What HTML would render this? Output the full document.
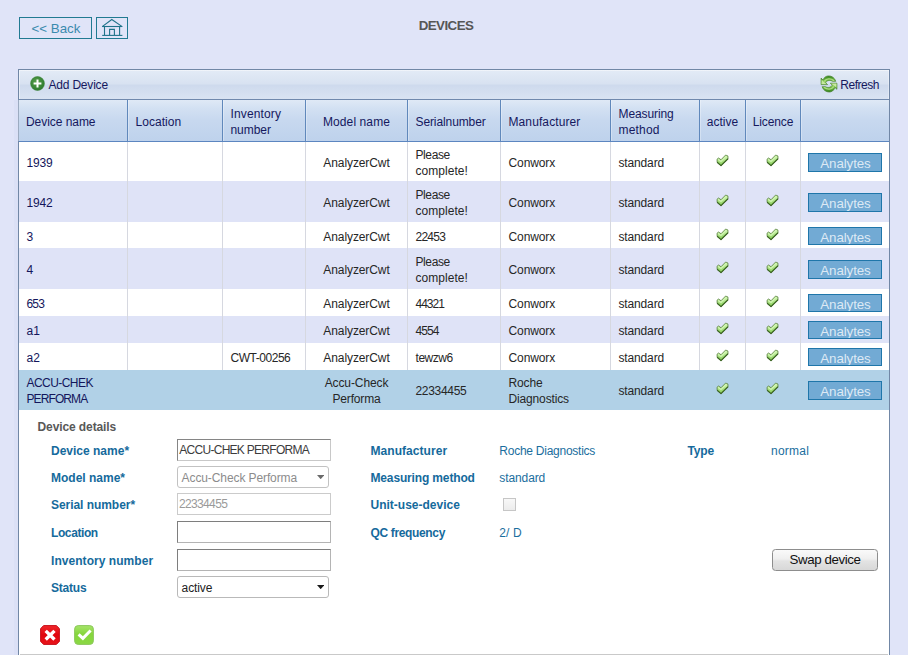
<!DOCTYPE html><html><head><meta charset="utf-8"><title>Devices</title><style>
html,body{margin:0;padding:0}
body{width:908px;height:655px;overflow:hidden;background:#e0e4f8;font-family:"Liberation Sans",sans-serif;font-size:12px;position:relative;color:#222}
.abs{position:absolute}
.btn0{position:absolute;top:17px;height:20px;border:1px solid #217a92;background:#e0e4f8;color:#3a8aae;font-size:13.33px;line-height:21px;text-align:center;box-sizing:content-box}
#title{position:absolute;left:346px;width:200px;top:17.6px;text-align:center;font-weight:bold;font-size:13.33px;color:#565656;letter-spacing:-0.55px;line-height:16px}
#panel{position:absolute;left:18px;top:69px;width:870px;height:600px;border:1px solid #7187a6;background:#fff}
#tb{position:absolute;left:19px;top:70px;width:870px;height:29px;box-shadow:inset 1px 1px 0 rgba(255,255,255,0.45),inset -1px 0 0 rgba(255,255,255,0.3);background:linear-gradient(#e3ebf6 0%,#d8e2f1 47%,#cedaed 53%,#d9e3f2 100%)}
#tb span{position:absolute;top:8px;line-height:14px;color:#15185e;font-size:12px;letter-spacing:-0.2px}
#hd{position:absolute;left:19px;top:99px;width:870px;height:41px;border-top:1px solid #7089ad;border-bottom:1px solid #5c86c0;box-sizing:content-box;background:linear-gradient(#dfe9f6 0%,#d2e0f2 22%,#c7d8ef 50%,#bed2ec 100%)}
.hc{position:absolute;top:0;height:41px;border-left:1px solid #6088bb;box-shadow:inset 1px 0 0 rgba(255,255,255,0.3);color:#15185e;display:flex;align-items:center;line-height:16px;letter-spacing:0;box-sizing:border-box;padding-left:7.5px;padding-top:2px}
.row{position:absolute;left:19px;width:870px}
.row.alt{background:#dfe3f7}
.row.sel{background:#b1d1e7}
.c{position:absolute;top:0;height:100%;border-left:1px solid #d6d8e0;display:flex;align-items:center;line-height:16px;box-sizing:border-box;padding-left:7.5px;padding-top:3px;letter-spacing:0;color:#262626}
.row.sel .c{border-left-color:transparent}
.c.first{border-left:none;color:#13165c}
.c.ctr{justify-content:center;text-align:center;padding-left:0}
.an{position:absolute;left:788.5px;height:16.5px;border:1px solid #1f76aa;background:#72aad4;color:#dde9f4;padding-left:2px;width:70px;font-size:13.33px;text-align:center;line-height:20px;overflow:hidden;letter-spacing:-0.1px}
.ck{position:absolute}
.lbl{position:absolute;font-weight:bold;color:#156a9c;letter-spacing:-0.15px;line-height:14px}
.val{position:absolute;color:#1a6e9e;letter-spacing:-0.25px;line-height:14px}
.inp{position:absolute;left:177px;width:152px;box-sizing:content-box;background:#fff;line-height:14px;white-space:nowrap;overflow:hidden}
</style></head><body>
<div class="btn0" style="left:19px;width:71px;text-indent:1px">&lt;&lt; Back</div>
<div class="btn0" style="left:96px;width:30px"><svg width="30" height="20" viewBox="0 0 30 20" style="position:absolute;left:0;top:0"><g fill="none" stroke="#1f738a" stroke-width="1.1"><path d="M5.2,8.6 L14.8,1.5 L25.2,8.6"/><path d="M5.2,8.5 H25.3"/><path d="M7.5,8.5 V17 M22.6,8.5 V17"/><path d="M12.6,17 V11.4 H17.4 V17"/><path d="M5.2,17.4 H25.4"/></g></svg></div>
<div id="title">DEVICES</div>
<svg width="0" height="0" style="position:absolute"><defs><linearGradient id="gck" x1="0" y1="0" x2="0" y2="1"><stop offset="0.2" stop-color="#c9f2a6"/><stop offset="0.8" stop-color="#93d566"/></linearGradient><linearGradient id="gra" x1="0" y1="0" x2="0" y2="1"><stop offset="0" stop-color="#2f7f1a"/><stop offset="0.45" stop-color="#6db840"/><stop offset="1" stop-color="#b9e584"/></linearGradient><linearGradient id="grb" x1="0" y1="0" x2="0" y2="1"><stop offset="0" stop-color="#c4ea8c"/><stop offset="0.55" stop-color="#6db840"/><stop offset="1" stop-color="#2f7f1a"/></linearGradient></defs></svg>
<div class="abs" style="left:14px;top:100px;width:4px;height:555px;background:#dbe0f6"></div>
<div id="panel"></div>
<div id="tb">
<svg class="abs" style="left:10.5px;top:6.2px" width="15" height="15" viewBox="0 0 15 15"><defs><radialGradient id="g1" cx="0.42" cy="0.38" r="0.65"><stop offset="0" stop-color="#58a04c"/><stop offset="1" stop-color="#2b7a2c"/></radialGradient></defs><circle cx="7.5" cy="7.5" r="6.9" fill="url(#g1)" stroke="#3a8238" stroke-width="0.6"/><path d="M7.5,3.6 V11.4 M3.6,7.5 H11.4" stroke="#fff" stroke-width="2"/></svg>
<span style="left:29.5px">Add Device</span>
<svg class="abs" style="left:797px;top:2px" width="26" height="24" viewBox="0 0 26 24"><g stroke="#47822e" stroke-width="0.7" stroke-linejoin="round"><path d="M5.1,6.1 L5.1,12.6 L11.6,12.6 L9.7,10.7 C10.6,8.6 13.8,7.6 16.4,9.3 L19.8,9.3 C18.6,5.6 15.6,3.9 12.7,3.9 C10.3,3.9 8.2,5 7.0,8.0 Z" fill="url(#gra)"/><path d="M20.9,17.3 L20.9,11.2 L14.3,11.2 L16.2,13.1 C15.3,15.3 12.1,16.3 9.5,14.7 L6.1,14.7 C7.3,18.3 10.3,20 13.2,20 C15.6,20 17.7,18.9 18.9,15.4 Z" fill="url(#grb)"/></g><g fill="none" stroke-linecap="round"><path d="M8.6,9.0 C10.2,6.6 14.6,5.9 17.6,8.4" stroke="#b9e290" stroke-width="1.3" opacity="0.85"/><path d="M17.4,15.0 C15.8,17.4 11.4,18.1 8.4,15.6" stroke="#b9e290" stroke-width="1.3" opacity="0.85"/></g><path d="M5.7,7.8 L5.7,12.0 L9.9,12.0 Z" fill="#c6e9a0"/><path d="M20.3,15.6 L20.3,11.8 L16.1,11.8 Z" fill="#c6e9a0"/></svg>
<span style="left:821.3px;letter-spacing:-0.5px">Refresh</span>
</div>
<div id="hd">
<div class="hc" style="left:-1px;width:109px;border-left:none;padding-left:8px;"><div><span style="letter-spacing:-0.05px">Device name</span></div></div>
<div class="hc" style="left:108px;width:95px;"><div><span style="letter-spacing:0.05px">Location</span></div></div>
<div class="hc" style="left:203px;width:83px;"><div><span style="letter-spacing:0.13px">Inventory</span><br><span style="letter-spacing:-0.05px">number</span></div></div>
<div class="hc" style="left:286px;width:102px;justify-content:center;padding-left:0;"><div><span style="letter-spacing:0.1px">Model name</span></div></div>
<div class="hc" style="left:388px;width:93px;"><div><span style="letter-spacing:-0.1px">Serialnumber</span></div></div>
<div class="hc" style="left:481px;width:110px;"><div><span style="letter-spacing:0.1px">Manufacturer</span></div></div>
<div class="hc" style="left:591px;width:89px;"><div><span style="letter-spacing:-0.1px">Measuring</span><br><span style="letter-spacing:0.2px">method</span></div></div>
<div class="hc" style="left:680px;width:46px;justify-content:center;padding-left:0;"><div><span style="letter-spacing:0.0px">active</span></div></div>
<div class="hc" style="left:726px;width:55px;justify-content:center;padding-left:0;"><div><span style="letter-spacing:-0.1px">Licence</span></div></div>
<div class="hc" style="left:781px;width:89px;"><div></div></div>
</div>
<div class="row" style="top:142px;height:39px">
<div class="c first" style="left:0;width:110px;padding-left:7.5px;"><div><span style="letter-spacing:-0.15px">1939</span></div></div>
<div class="c" style="left:108px;width:95px;"><div></div></div>
<div class="c" style="left:203px;width:83px;"><div></div></div>
<div class="c ctr" style="left:286px;width:102px;"><div><span style="letter-spacing:-0.1px">AnalyzerCwt</span></div></div>
<div class="c" style="left:388px;width:93px;"><div><span style="letter-spacing:-0.4px">Please</span><br><span style="letter-spacing:0.05px">complete!</span></div></div>
<div class="c" style="left:481px;width:110px;"><div><span style="letter-spacing:-0.1px">Conworx</span></div></div>
<div class="c" style="left:591px;width:89px;"><div><span style="letter-spacing:-0.15px">standard</span></div></div>
<div class="c" style="left:680px;width:46px"></div>
<div class="c" style="left:726px;width:55px"></div>
<div class="c" style="left:781px;width:89px"></div>
<svg class="ck" style="left:693.0px;top:8.25px" width="22" height="20" viewBox="0 0 22 20"><path d="M5.05,9.2 L6.6,8.0 L9.0,9.75 L13.6,5.05 L15.9,5.95 L16.05,8.9 L9.0,15.75 L5.15,12.4 Z" fill="url(#gck)" stroke="#557c3c" stroke-width="0.8" stroke-linejoin="round"/><path d="M5.2,12.3 L9.0,15.6 L16.0,8.8" fill="none" stroke="#3c6424" stroke-width="1.2" stroke-linejoin="round"/><path d="M6.4,9.6 L9.0,11.5 L14.2,6.4" fill="none" stroke="#d2f5b4" stroke-width="1.1" stroke-linecap="round"/></svg>
<svg class="ck" style="left:743.1px;top:8.25px" width="22" height="20" viewBox="0 0 22 20"><path d="M5.05,9.2 L6.6,8.0 L9.0,9.75 L13.6,5.05 L15.9,5.95 L16.05,8.9 L9.0,15.75 L5.15,12.4 Z" fill="url(#gck)" stroke="#557c3c" stroke-width="0.8" stroke-linejoin="round"/><path d="M5.2,12.3 L9.0,15.6 L16.0,8.8" fill="none" stroke="#3c6424" stroke-width="1.2" stroke-linejoin="round"/><path d="M6.4,9.6 L9.0,11.5 L14.2,6.4" fill="none" stroke="#d2f5b4" stroke-width="1.1" stroke-linecap="round"/></svg>
<div class="an" style="top:11.25px">Analytes</div>
</div>
<div class="row alt" style="top:181px;height:40.5px">
<div class="c first" style="left:0;width:110px;padding-left:7.5px;"><div><span style="letter-spacing:-0.15px">1942</span></div></div>
<div class="c" style="left:108px;width:95px;"><div></div></div>
<div class="c" style="left:203px;width:83px;"><div></div></div>
<div class="c ctr" style="left:286px;width:102px;"><div><span style="letter-spacing:-0.1px">AnalyzerCwt</span></div></div>
<div class="c" style="left:388px;width:93px;"><div><span style="letter-spacing:-0.4px">Please</span><br><span style="letter-spacing:0.05px">complete!</span></div></div>
<div class="c" style="left:481px;width:110px;"><div><span style="letter-spacing:-0.1px">Conworx</span></div></div>
<div class="c" style="left:591px;width:89px;"><div><span style="letter-spacing:-0.15px">standard</span></div></div>
<div class="c" style="left:680px;width:46px"></div>
<div class="c" style="left:726px;width:55px"></div>
<div class="c" style="left:781px;width:89px"></div>
<svg class="ck" style="left:693.0px;top:9.00px" width="22" height="20" viewBox="0 0 22 20"><path d="M5.05,9.2 L6.6,8.0 L9.0,9.75 L13.6,5.05 L15.9,5.95 L16.05,8.9 L9.0,15.75 L5.15,12.4 Z" fill="url(#gck)" stroke="#557c3c" stroke-width="0.8" stroke-linejoin="round"/><path d="M5.2,12.3 L9.0,15.6 L16.0,8.8" fill="none" stroke="#3c6424" stroke-width="1.2" stroke-linejoin="round"/><path d="M6.4,9.6 L9.0,11.5 L14.2,6.4" fill="none" stroke="#d2f5b4" stroke-width="1.1" stroke-linecap="round"/></svg>
<svg class="ck" style="left:743.1px;top:9.00px" width="22" height="20" viewBox="0 0 22 20"><path d="M5.05,9.2 L6.6,8.0 L9.0,9.75 L13.6,5.05 L15.9,5.95 L16.05,8.9 L9.0,15.75 L5.15,12.4 Z" fill="url(#gck)" stroke="#557c3c" stroke-width="0.8" stroke-linejoin="round"/><path d="M5.2,12.3 L9.0,15.6 L16.0,8.8" fill="none" stroke="#3c6424" stroke-width="1.2" stroke-linejoin="round"/><path d="M6.4,9.6 L9.0,11.5 L14.2,6.4" fill="none" stroke="#d2f5b4" stroke-width="1.1" stroke-linecap="round"/></svg>
<div class="an" style="top:12.00px">Analytes</div>
</div>
<div class="row" style="top:221.5px;height:26.5px">
<div class="c first" style="left:0;width:110px;padding-left:7.5px;padding-top:4.5px;"><div>3</div></div>
<div class="c" style="left:108px;width:95px;padding-top:4.5px;"><div></div></div>
<div class="c" style="left:203px;width:83px;padding-top:4.5px;"><div></div></div>
<div class="c ctr" style="left:286px;width:102px;padding-top:4.5px;"><div><span style="letter-spacing:-0.1px">AnalyzerCwt</span></div></div>
<div class="c" style="left:388px;width:93px;padding-top:4.5px;"><div><span style="letter-spacing:-0.75px">22453</span></div></div>
<div class="c" style="left:481px;width:110px;padding-top:4.5px;"><div><span style="letter-spacing:-0.1px">Conworx</span></div></div>
<div class="c" style="left:591px;width:89px;padding-top:4.5px;"><div><span style="letter-spacing:-0.15px">standard</span></div></div>
<div class="c" style="left:680px;width:46px"></div>
<div class="c" style="left:726px;width:55px"></div>
<div class="c" style="left:781px;width:89px"></div>
<svg class="ck" style="left:693.0px;top:2.00px" width="22" height="20" viewBox="0 0 22 20"><path d="M5.05,9.2 L6.6,8.0 L9.0,9.75 L13.6,5.05 L15.9,5.95 L16.05,8.9 L9.0,15.75 L5.15,12.4 Z" fill="url(#gck)" stroke="#557c3c" stroke-width="0.8" stroke-linejoin="round"/><path d="M5.2,12.3 L9.0,15.6 L16.0,8.8" fill="none" stroke="#3c6424" stroke-width="1.2" stroke-linejoin="round"/><path d="M6.4,9.6 L9.0,11.5 L14.2,6.4" fill="none" stroke="#d2f5b4" stroke-width="1.1" stroke-linecap="round"/></svg>
<svg class="ck" style="left:743.1px;top:2.00px" width="22" height="20" viewBox="0 0 22 20"><path d="M5.05,9.2 L6.6,8.0 L9.0,9.75 L13.6,5.05 L15.9,5.95 L16.05,8.9 L9.0,15.75 L5.15,12.4 Z" fill="url(#gck)" stroke="#557c3c" stroke-width="0.8" stroke-linejoin="round"/><path d="M5.2,12.3 L9.0,15.6 L16.0,8.8" fill="none" stroke="#3c6424" stroke-width="1.2" stroke-linejoin="round"/><path d="M6.4,9.6 L9.0,11.5 L14.2,6.4" fill="none" stroke="#d2f5b4" stroke-width="1.1" stroke-linecap="round"/></svg>
<div class="an" style="top:5.00px">Analytes</div>
</div>
<div class="row alt" style="top:248px;height:40.5px">
<div class="c first" style="left:0;width:110px;padding-left:7.5px;"><div>4</div></div>
<div class="c" style="left:108px;width:95px;"><div></div></div>
<div class="c" style="left:203px;width:83px;"><div></div></div>
<div class="c ctr" style="left:286px;width:102px;"><div><span style="letter-spacing:-0.1px">AnalyzerCwt</span></div></div>
<div class="c" style="left:388px;width:93px;"><div><span style="letter-spacing:-0.4px">Please</span><br><span style="letter-spacing:0.05px">complete!</span></div></div>
<div class="c" style="left:481px;width:110px;"><div><span style="letter-spacing:-0.1px">Conworx</span></div></div>
<div class="c" style="left:591px;width:89px;"><div><span style="letter-spacing:-0.15px">standard</span></div></div>
<div class="c" style="left:680px;width:46px"></div>
<div class="c" style="left:726px;width:55px"></div>
<div class="c" style="left:781px;width:89px"></div>
<svg class="ck" style="left:693.0px;top:9.00px" width="22" height="20" viewBox="0 0 22 20"><path d="M5.05,9.2 L6.6,8.0 L9.0,9.75 L13.6,5.05 L15.9,5.95 L16.05,8.9 L9.0,15.75 L5.15,12.4 Z" fill="url(#gck)" stroke="#557c3c" stroke-width="0.8" stroke-linejoin="round"/><path d="M5.2,12.3 L9.0,15.6 L16.0,8.8" fill="none" stroke="#3c6424" stroke-width="1.2" stroke-linejoin="round"/><path d="M6.4,9.6 L9.0,11.5 L14.2,6.4" fill="none" stroke="#d2f5b4" stroke-width="1.1" stroke-linecap="round"/></svg>
<svg class="ck" style="left:743.1px;top:9.00px" width="22" height="20" viewBox="0 0 22 20"><path d="M5.05,9.2 L6.6,8.0 L9.0,9.75 L13.6,5.05 L15.9,5.95 L16.05,8.9 L9.0,15.75 L5.15,12.4 Z" fill="url(#gck)" stroke="#557c3c" stroke-width="0.8" stroke-linejoin="round"/><path d="M5.2,12.3 L9.0,15.6 L16.0,8.8" fill="none" stroke="#3c6424" stroke-width="1.2" stroke-linejoin="round"/><path d="M6.4,9.6 L9.0,11.5 L14.2,6.4" fill="none" stroke="#d2f5b4" stroke-width="1.1" stroke-linecap="round"/></svg>
<div class="an" style="top:12.00px">Analytes</div>
</div>
<div class="row" style="top:288.5px;height:27.0px">
<div class="c first" style="left:0;width:110px;padding-left:7.5px;padding-top:4.5px;"><div><span style="letter-spacing:-0.8px">653</span></div></div>
<div class="c" style="left:108px;width:95px;padding-top:4.5px;"><div></div></div>
<div class="c" style="left:203px;width:83px;padding-top:4.5px;"><div></div></div>
<div class="c ctr" style="left:286px;width:102px;padding-top:4.5px;"><div><span style="letter-spacing:-0.1px">AnalyzerCwt</span></div></div>
<div class="c" style="left:388px;width:93px;padding-top:4.5px;"><div><span style="letter-spacing:-1.0px">44321</span></div></div>
<div class="c" style="left:481px;width:110px;padding-top:4.5px;"><div><span style="letter-spacing:-0.1px">Conworx</span></div></div>
<div class="c" style="left:591px;width:89px;padding-top:4.5px;"><div><span style="letter-spacing:-0.15px">standard</span></div></div>
<div class="c" style="left:680px;width:46px"></div>
<div class="c" style="left:726px;width:55px"></div>
<div class="c" style="left:781px;width:89px"></div>
<svg class="ck" style="left:693.0px;top:2.25px" width="22" height="20" viewBox="0 0 22 20"><path d="M5.05,9.2 L6.6,8.0 L9.0,9.75 L13.6,5.05 L15.9,5.95 L16.05,8.9 L9.0,15.75 L5.15,12.4 Z" fill="url(#gck)" stroke="#557c3c" stroke-width="0.8" stroke-linejoin="round"/><path d="M5.2,12.3 L9.0,15.6 L16.0,8.8" fill="none" stroke="#3c6424" stroke-width="1.2" stroke-linejoin="round"/><path d="M6.4,9.6 L9.0,11.5 L14.2,6.4" fill="none" stroke="#d2f5b4" stroke-width="1.1" stroke-linecap="round"/></svg>
<svg class="ck" style="left:743.1px;top:2.25px" width="22" height="20" viewBox="0 0 22 20"><path d="M5.05,9.2 L6.6,8.0 L9.0,9.75 L13.6,5.05 L15.9,5.95 L16.05,8.9 L9.0,15.75 L5.15,12.4 Z" fill="url(#gck)" stroke="#557c3c" stroke-width="0.8" stroke-linejoin="round"/><path d="M5.2,12.3 L9.0,15.6 L16.0,8.8" fill="none" stroke="#3c6424" stroke-width="1.2" stroke-linejoin="round"/><path d="M6.4,9.6 L9.0,11.5 L14.2,6.4" fill="none" stroke="#d2f5b4" stroke-width="1.1" stroke-linecap="round"/></svg>
<div class="an" style="top:5.25px">Analytes</div>
</div>
<div class="row alt" style="top:315.5px;height:27.0px">
<div class="c first" style="left:0;width:110px;padding-left:7.5px;padding-top:4.5px;"><div>a1</div></div>
<div class="c" style="left:108px;width:95px;padding-top:4.5px;"><div></div></div>
<div class="c" style="left:203px;width:83px;padding-top:4.5px;"><div></div></div>
<div class="c ctr" style="left:286px;width:102px;padding-top:4.5px;"><div><span style="letter-spacing:-0.1px">AnalyzerCwt</span></div></div>
<div class="c" style="left:388px;width:93px;padding-top:4.5px;"><div><span style="letter-spacing:-0.95px">4554</span></div></div>
<div class="c" style="left:481px;width:110px;padding-top:4.5px;"><div><span style="letter-spacing:-0.1px">Conworx</span></div></div>
<div class="c" style="left:591px;width:89px;padding-top:4.5px;"><div><span style="letter-spacing:-0.15px">standard</span></div></div>
<div class="c" style="left:680px;width:46px"></div>
<div class="c" style="left:726px;width:55px"></div>
<div class="c" style="left:781px;width:89px"></div>
<svg class="ck" style="left:693.0px;top:2.25px" width="22" height="20" viewBox="0 0 22 20"><path d="M5.05,9.2 L6.6,8.0 L9.0,9.75 L13.6,5.05 L15.9,5.95 L16.05,8.9 L9.0,15.75 L5.15,12.4 Z" fill="url(#gck)" stroke="#557c3c" stroke-width="0.8" stroke-linejoin="round"/><path d="M5.2,12.3 L9.0,15.6 L16.0,8.8" fill="none" stroke="#3c6424" stroke-width="1.2" stroke-linejoin="round"/><path d="M6.4,9.6 L9.0,11.5 L14.2,6.4" fill="none" stroke="#d2f5b4" stroke-width="1.1" stroke-linecap="round"/></svg>
<svg class="ck" style="left:743.1px;top:2.25px" width="22" height="20" viewBox="0 0 22 20"><path d="M5.05,9.2 L6.6,8.0 L9.0,9.75 L13.6,5.05 L15.9,5.95 L16.05,8.9 L9.0,15.75 L5.15,12.4 Z" fill="url(#gck)" stroke="#557c3c" stroke-width="0.8" stroke-linejoin="round"/><path d="M5.2,12.3 L9.0,15.6 L16.0,8.8" fill="none" stroke="#3c6424" stroke-width="1.2" stroke-linejoin="round"/><path d="M6.4,9.6 L9.0,11.5 L14.2,6.4" fill="none" stroke="#d2f5b4" stroke-width="1.1" stroke-linecap="round"/></svg>
<div class="an" style="top:5.25px">Analytes</div>
</div>
<div class="row" style="top:342.5px;height:27.0px">
<div class="c first" style="left:0;width:110px;padding-left:7.5px;padding-top:4.5px;"><div>a2</div></div>
<div class="c" style="left:108px;width:95px;padding-top:4.5px;"><div></div></div>
<div class="c" style="left:203px;width:83px;padding-top:4.5px;"><div><span style="letter-spacing:-0.47px">CWT-00256</span></div></div>
<div class="c ctr" style="left:286px;width:102px;padding-top:4.5px;"><div><span style="letter-spacing:-0.1px">AnalyzerCwt</span></div></div>
<div class="c" style="left:388px;width:93px;padding-top:4.5px;"><div><span style="letter-spacing:-0.45px">tewzw6</span></div></div>
<div class="c" style="left:481px;width:110px;padding-top:4.5px;"><div><span style="letter-spacing:-0.1px">Conworx</span></div></div>
<div class="c" style="left:591px;width:89px;padding-top:4.5px;"><div><span style="letter-spacing:-0.15px">standard</span></div></div>
<div class="c" style="left:680px;width:46px"></div>
<div class="c" style="left:726px;width:55px"></div>
<div class="c" style="left:781px;width:89px"></div>
<svg class="ck" style="left:693.0px;top:2.25px" width="22" height="20" viewBox="0 0 22 20"><path d="M5.05,9.2 L6.6,8.0 L9.0,9.75 L13.6,5.05 L15.9,5.95 L16.05,8.9 L9.0,15.75 L5.15,12.4 Z" fill="url(#gck)" stroke="#557c3c" stroke-width="0.8" stroke-linejoin="round"/><path d="M5.2,12.3 L9.0,15.6 L16.0,8.8" fill="none" stroke="#3c6424" stroke-width="1.2" stroke-linejoin="round"/><path d="M6.4,9.6 L9.0,11.5 L14.2,6.4" fill="none" stroke="#d2f5b4" stroke-width="1.1" stroke-linecap="round"/></svg>
<svg class="ck" style="left:743.1px;top:2.25px" width="22" height="20" viewBox="0 0 22 20"><path d="M5.05,9.2 L6.6,8.0 L9.0,9.75 L13.6,5.05 L15.9,5.95 L16.05,8.9 L9.0,15.75 L5.15,12.4 Z" fill="url(#gck)" stroke="#557c3c" stroke-width="0.8" stroke-linejoin="round"/><path d="M5.2,12.3 L9.0,15.6 L16.0,8.8" fill="none" stroke="#3c6424" stroke-width="1.2" stroke-linejoin="round"/><path d="M6.4,9.6 L9.0,11.5 L14.2,6.4" fill="none" stroke="#d2f5b4" stroke-width="1.1" stroke-linecap="round"/></svg>
<div class="an" style="top:5.25px">Analytes</div>
</div>
<div class="row sel" style="top:369.5px;height:40.0px">
<div class="c first" style="left:0;width:110px;padding-left:7.5px;"><div><span style="letter-spacing:-0.55px">ACCU-CHEK</span><br><span style="letter-spacing:-0.9px">PERFORMA</span></div></div>
<div class="c" style="left:108px;width:95px;"><div></div></div>
<div class="c" style="left:203px;width:83px;"><div></div></div>
<div class="c ctr" style="left:286px;width:102px;"><div><span style="letter-spacing:-0.1px">Accu-Check</span><br><span style="letter-spacing:-0.15px">Performa</span></div></div>
<div class="c" style="left:388px;width:93px;"><div><span style="letter-spacing:-0.3px">22334455</span></div></div>
<div class="c" style="left:481px;width:110px;"><div><span style="letter-spacing:-0.15px">Roche</span><br><span style="letter-spacing:-0.15px">Diagnostics</span></div></div>
<div class="c" style="left:591px;width:89px;"><div><span style="letter-spacing:-0.15px">standard</span></div></div>
<div class="c" style="left:680px;width:46px"></div>
<div class="c" style="left:726px;width:55px"></div>
<div class="c" style="left:781px;width:89px"></div>
<svg class="ck" style="left:693.0px;top:8.75px" width="22" height="20" viewBox="0 0 22 20"><path d="M5.05,9.2 L6.6,8.0 L9.0,9.75 L13.6,5.05 L15.9,5.95 L16.05,8.9 L9.0,15.75 L5.15,12.4 Z" fill="url(#gck)" stroke="#557c3c" stroke-width="0.8" stroke-linejoin="round"/><path d="M5.2,12.3 L9.0,15.6 L16.0,8.8" fill="none" stroke="#3c6424" stroke-width="1.2" stroke-linejoin="round"/><path d="M6.4,9.6 L9.0,11.5 L14.2,6.4" fill="none" stroke="#d2f5b4" stroke-width="1.1" stroke-linecap="round"/></svg>
<svg class="ck" style="left:743.1px;top:8.75px" width="22" height="20" viewBox="0 0 22 20"><path d="M5.05,9.2 L6.6,8.0 L9.0,9.75 L13.6,5.05 L15.9,5.95 L16.05,8.9 L9.0,15.75 L5.15,12.4 Z" fill="url(#gck)" stroke="#557c3c" stroke-width="0.8" stroke-linejoin="round"/><path d="M5.2,12.3 L9.0,15.6 L16.0,8.8" fill="none" stroke="#3c6424" stroke-width="1.2" stroke-linejoin="round"/><path d="M6.4,9.6 L9.0,11.5 L14.2,6.4" fill="none" stroke="#d2f5b4" stroke-width="1.1" stroke-linecap="round"/></svg>
<div class="an" style="top:11.75px">Analytes</div>
</div>
<div class="abs" style="left:37.5px;top:420px;font-weight:bold;color:#585858;line-height:14px;letter-spacing:-0.1px">Device details</div>
<div class="lbl" style="left:51px;top:443.5px;letter-spacing:0.0px">Device name*</div>
<div class="lbl" style="left:51px;top:470.5px;letter-spacing:0.0px">Model name*</div>
<div class="lbl" style="left:51px;top:497.5px;letter-spacing:-0.05px">Serial number*</div>
<div class="lbl" style="left:51px;top:525.5px;letter-spacing:-0.4px">Location</div>
<div class="lbl" style="left:51px;top:554.1px;letter-spacing:0.05px">Inventory number</div>
<div class="lbl" style="left:51px;top:580.5px;letter-spacing:-0.2px">Status</div>
<div class="lbl" style="left:370.5px;top:444.0px;letter-spacing:0.05px">Manufacturer</div>
<div class="val" style="left:499.3px;top:444.0px;letter-spacing:-0.25px">Roche Diagnostics</div>
<div class="lbl" style="left:370.5px;top:471.2px;letter-spacing:-0.15px">Measuring method</div>
<div class="val" style="left:499.3px;top:471.2px;letter-spacing:-0.1px">standard</div>
<div class="lbl" style="left:370.5px;top:497.7px;letter-spacing:0.0px">Unit-use-device</div>
<div class="lbl" style="left:370.5px;top:526.2px;letter-spacing:-0.35px">QC frequency</div>
<div class="val" style="left:499.3px;top:526.2px;letter-spacing:0.15px">2/ D</div>
<div class="lbl" style="left:687.5px;top:444px">Type</div>
<div class="val" style="left:771px;top:444px;letter-spacing:0.25px">normal</div>
<div class="inp" style="top:439px;height:20px;border:1px solid;border-color:#858585 #c8c8c8 #c8c8c8 #858585;color:#3c3c3c;letter-spacing:-0.72px;padding-left:1.3px;width:150.7px;line-height:20px">ACCU-CHEK PERFORMA</div>
<div class="inp" style="top:466px;height:20px;border:1px solid #c2c2c2;border-radius:3px;color:#8c8c8c;letter-spacing:-0.1px;padding-left:3.6px;width:146.9px;line-height:23px">Accu-Check Performa<svg class="abs" style="left:138.8px;top:7.9px" width="7.4" height="4.2" viewBox="0 0 7.4 4.2"><path d="M0,0H7.4L3.7,4.2Z" fill="#6a6a6a"/></svg></div>
<div class="inp" style="top:493px;height:20px;border:1px solid #cbcbcb;color:#9a9a9a;letter-spacing:-0.65px;padding-left:1px;width:151px;line-height:20px">22334455</div>
<div class="inp" style="top:521px;height:20px;border:1px solid;border-color:#7e7e7e #b4b4b4 #b4b4b4 #7e7e7e"></div>
<div class="inp" style="top:549px;height:20px;border:1px solid;border-color:#7e7e7e #b4b4b4 #b4b4b4 #7e7e7e"></div>
<div class="inp" style="top:576px;height:20px;border:1px solid #b9b9b9;border-radius:3px;color:#222;letter-spacing:-0.1px;padding-left:3.6px;width:146.9px;line-height:23px">active<svg class="abs" style="left:138.8px;top:7.6px" width="7.4" height="4.2" viewBox="0 0 7.4 4.2"><path d="M0,0H7.4L3.7,4.2Z" fill="#1a1a1a"/></svg></div>
<div class="abs" style="left:503px;top:497.9px;width:11px;height:11px;border:1px solid #c6c6c6;background:linear-gradient(#f8f8f8,#ececec)"></div>
<div class="abs" style="left:772px;top:549px;width:104px;height:19.5px;border:1px solid #8d8d8d;border-radius:3.5px;background:linear-gradient(#fafafa 0%,#efefef 45%,#e3e3e3 55%,#d8d8d8 100%);color:#111;font-size:13.33px;text-align:center;line-height:20px;letter-spacing:-0.42px">Swap device</div>
<svg class="abs" style="left:40px;top:625px" width="20" height="20" viewBox="0 0 20 20"><defs><linearGradient id="gr" x1="0" y1="0" x2="0" y2="1"><stop offset="0" stop-color="#f0282c"/><stop offset="0.5" stop-color="#e0060e"/><stop offset="1" stop-color="#e8141a"/></linearGradient></defs><path d="M3.8,0.6 H16.2 Q17.2,0.8 19.4,3.8 V16.2 Q19.2,17.2 16.2,19.4 H3.8 Q2.8,19.2 0.6,16.2 V3.8 Q0.8,2.8 3.8,0.6 Z" fill="url(#gr)" stroke="#c8101a" stroke-width="1"/><path d="M5.7,5.9 L14.5,14.5 M14.5,5.9 L5.7,14.5" stroke="#fff" stroke-width="3.4" stroke-linecap="butt"/></svg>
<svg class="abs" style="left:74px;top:625px" width="20" height="20" viewBox="0 0 20 20"><defs><linearGradient id="gg" x1="0" y1="0" x2="0" y2="1"><stop offset="0" stop-color="#a6e46a"/><stop offset="0.45" stop-color="#86d63c"/><stop offset="1" stop-color="#8ad844"/></linearGradient></defs><rect x="0.6" y="0.6" width="18.8" height="18.8" rx="3.6" fill="url(#gg)" stroke="#8cc85c" stroke-width="1"/><path d="M4.6,9.4 L8.9,13.3 L16.6,5.5" fill="none" stroke="#fff" stroke-width="3"/></svg>
<div class="abs" style="left:20px;top:654px;width:868px;height:1px;background:#c9c9c9"></div>
</body></html>
